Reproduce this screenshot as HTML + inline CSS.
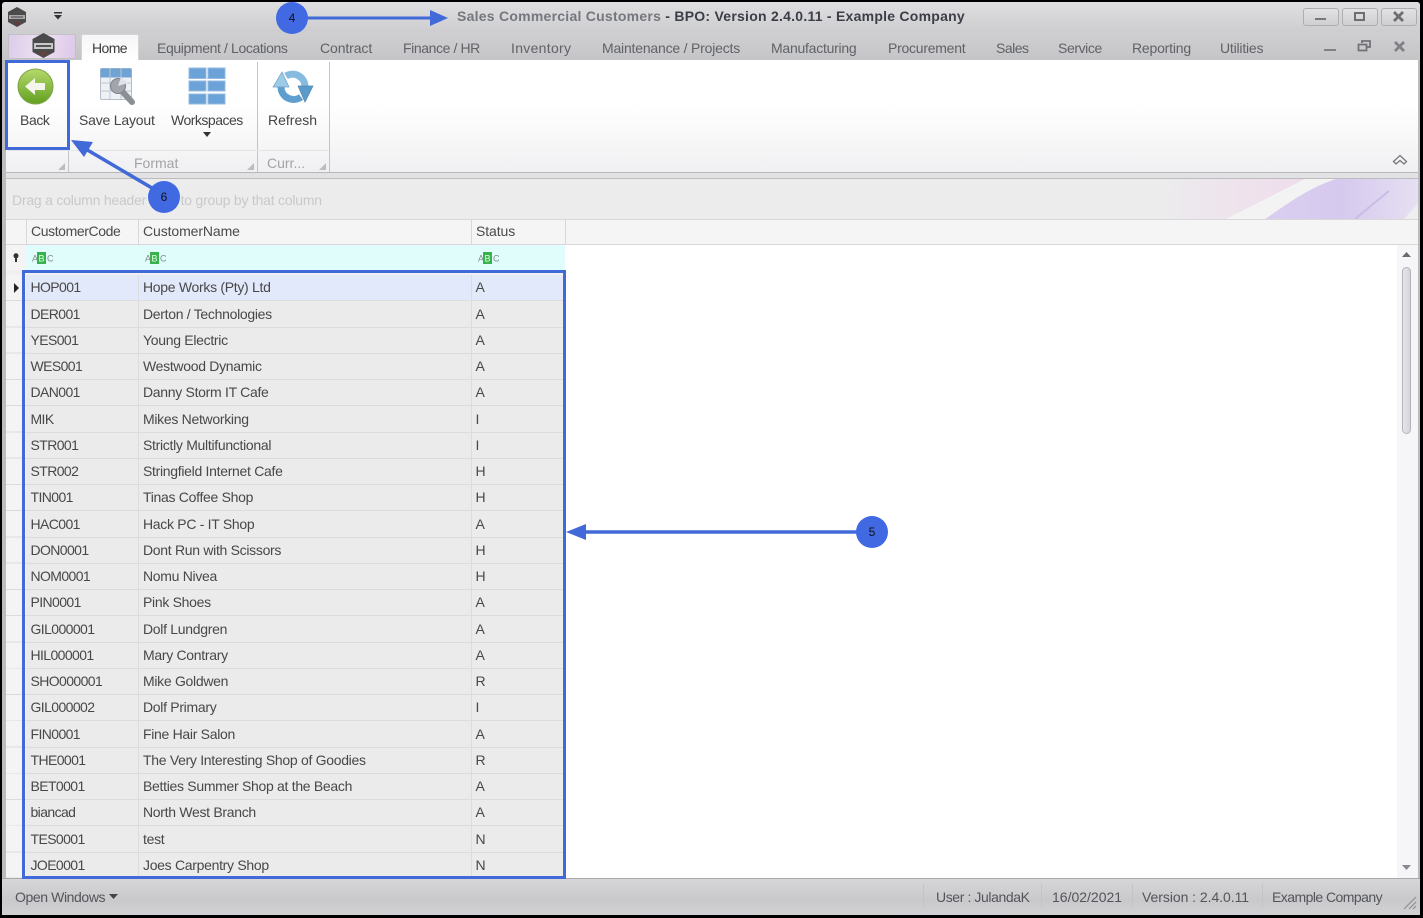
<!DOCTYPE html>
<html><head><meta charset="utf-8"><title>Sales Commercial Customers</title>
<style>
html,body{margin:0;padding:0;background:#000}
#p{position:relative;width:1423px;height:918px;overflow:hidden;background:#000;font-family:"Liberation Sans",sans-serif;font-size:14px;color:#4a4a4a}
#p div,#p span{position:absolute;white-space:nowrap}
.t{line-height:18px;height:18px;filter:blur(.3px)}
.tab{top:39px;color:#5f6268}
.r{left:7px;width:558px;height:26.25px;background:#ebebeb;border-bottom:1px solid #dcdcde;box-sizing:border-box}
.r span{top:3.3px;line-height:18px;color:#484848;filter:blur(.3px)}
.a{left:23.5px;letter-spacing:-.6px}.b{left:136px;letter-spacing:-.3px}.c{left:468.500px}
.sep{width:1px;background:#c4c4c6}
.num{width:32px;height:32px;border-radius:50%;background:#4169e1;color:#111;font-size:12px;line-height:32px;text-align:center}
</style></head><body><div id="p">
<!-- window frame -->
<div style="left:2px;top:2px;width:1418px;height:913px;background:#bcbcbf;border-radius:3px 3px 0 0"></div>
<div style="left:2px;top:2px;width:1418px;height:31px;background:linear-gradient(#dfdfe1,#cdcdcf);border-radius:3px 3px 0 0"></div>
<div style="left:2px;top:33px;width:1418px;height:27px;background:linear-gradient(#cfcfd1,#c5c5c7)"></div>

<!-- title bar -->
<svg style="position:absolute;left:6px;top:6px" width="22" height="22" viewBox="0 0 22 22"><path d="M11 1l9 5v10l-9 5-9-5V6z" fill="#4c4a4a"/><path d="M3 9h16v4H3z" fill="#a9a9a9"/><path d="M5 10.500h12v1H5z" fill="#444"/><path d="M8 16h6l-3 4z" fill="#6b3a36"/></svg>
<svg style="position:absolute;left:53px;top:11px" width="11" height="10" viewBox="0 0 11 10"><path d="M1 1h8v1.500H1zM1 4h8L5 8.500z" fill="#333"/></svg>
<div class="t" style="left:457px;top:7px;font-size:14px;font-weight:bold;color:#74777d;letter-spacing:.25px">Sales Commercial Customers <span style="position:static;color:#3b3e46">- BPO: Version 2.4.0.11 - Example Company</span></div>
<div style="left:1303px;top:8px;width:34px;height:16px;border:1px solid #aeaeb2;border-radius:3px;background:linear-gradient(#e2e2e4,#cfcfd2)"></div>
<div style="left:1342px;top:8px;width:34px;height:16px;border:1px solid #aeaeb2;border-radius:3px;background:linear-gradient(#e2e2e4,#cfcfd2)"></div>
<div style="left:1381px;top:8px;width:34px;height:16px;border:1px solid #aeaeb2;border-radius:3px;background:linear-gradient(#e2e2e4,#cfcfd2)"></div>
<div style="left:1315px;top:18px;width:11px;height:2px;background:#77787c"></div>
<div style="left:1354px;top:12px;width:7px;height:5px;border:2px solid #6d6e72"></div>
<svg style="position:absolute;left:1392px;top:11px" width="13" height="11" viewBox="0 0 13 11"><path d="M2 1l9 9M11 1l-9 9" stroke="#6d6e72" stroke-width="2.800"/></svg>

<!-- app button -->
<div style="left:8px;top:34px;width:68px;height:25px;background:linear-gradient(100deg,#d9cde8,#efe0f2 50%,#dcc8e8);border:1px solid #c2bfc6;box-sizing:border-box"></div>
<svg style="position:absolute;left:30px;top:32px" width="27" height="27" viewBox="0 0 27 27"><path d="M13.500 1l11 6v13l-11 6-11-6V7z" fill="#4b4a4a"/><path d="M4 11h19v6H4z" fill="#c8c8c8"/><path d="M6 13h15v2H6z" fill="#555"/><path d="M10 20h7l-3.500 5z" fill="#6d3f3a"/></svg>

<!-- tabs -->
<div style="left:81px;top:34px;width:58px;height:27px;background:linear-gradient(#f6f6f7,#fff);border:1px solid #d4d4d6;border-bottom:0;box-sizing:border-box;border-radius:2px 2px 0 0"></div>
<div class="t" style="left:92px;top:39px;color:#3c3c3c;letter-spacing:-.6px">Home</div>
<div class="t tab" style="left:157px;letter-spacing:-.38px">Equipment / Locations</div>
<div class="t tab" style="left:320px;letter-spacing:-.1px">Contract</div>
<div class="t tab" style="left:403px;letter-spacing:-.4px">Finance / HR</div>
<div class="t tab" style="left:511px;letter-spacing:.3px">Inventory</div>
<div class="t tab" style="left:602px;letter-spacing:-.2px">Maintenance / Projects</div>
<div class="t tab" style="left:771px;letter-spacing:-.25px">Manufacturing</div>
<div class="t tab" style="left:888px;letter-spacing:-.25px">Procurement</div>
<div class="t tab" style="left:996px;letter-spacing:-.5px">Sales</div>
<div class="t tab" style="left:1058px;letter-spacing:-.4px">Service</div>
<div class="t tab" style="left:1132px;letter-spacing:-.2px">Reporting</div>
<div class="t tab" style="left:1220px;letter-spacing:-.2px">Utilities</div>
<div style="left:1324px;top:49px;width:12px;height:2px;background:#808186"></div>
<svg style="position:absolute;left:1357px;top:40px" width="15" height="12" viewBox="0 0 15 12"><path d="M5 3V1h8v6h-3M1.500 4.500h8v6h-8z" fill="none" stroke="#717277" stroke-width="1.800"/></svg>
<svg style="position:absolute;left:1393px;top:41px" width="13" height="11" viewBox="0 0 13 11"><path d="M2 1l9 9M11 1l-9 9" stroke="#808186" stroke-width="2.800"/></svg>

<!-- ribbon -->
<div style="left:6px;top:60px;width:1412px;height:113px;background:linear-gradient(#fff 40%,#f0f0f2);border-bottom:1px solid #b8b8bb;box-sizing:border-box"></div>
<div class="sep" style="left:68px;top:62px;height:110px"></div>
<div class="sep" style="left:257px;top:62px;height:110px"></div>
<div class="sep" style="left:329px;top:62px;height:110px"></div>
<div style="left:8px;top:150px;width:320px;height:1px;background:#e6e6e8"></div>

<!-- back icon -->
<svg style="position:absolute;left:17px;top:68px" width="37" height="37" viewBox="0 0 37 37"><defs><linearGradient id="g" x1="0" y1="0" x2="0" y2="1"><stop offset="0" stop-color="#b5d96a"/><stop offset="1" stop-color="#62a020"/></linearGradient></defs><circle cx="18.500" cy="18.500" r="17.500" fill="url(#g)" stroke="#7fa34a"/><path d="M8 18.500l10-8.500v5h10v7H18v5z" fill="#f4f6ec"/></svg>
<div class="t" style="left:20px;top:111px;color:#444;letter-spacing:-.4px">Back</div>

<!-- save layout icon -->
<svg style="position:absolute;left:99px;top:67px" width="38" height="38" viewBox="0 0 38 38"><rect x="1.500" y="1.500" width="31" height="31" rx="1.500" fill="#eef1f4" stroke="#b5bec9"/><rect x="1.500" y="1.500" width="31" height="9" fill="#6fa3d4"/><path d="M11 1v31M22 1v31M1 16h31M1 24h31" stroke="#bcc6d2"/><path d="M20 21L33 35" stroke="#8b9097" stroke-width="6" stroke-linecap="round"/><circle cx="19" cy="19" r="7.500" fill="#a2a6ac" stroke="#7d8187"/><path d="M19 19l3-9 7 6z" fill="#dfe4ea"/></svg>
<div class="t" style="left:79px;top:111px;color:#444;letter-spacing:-.2px">Save Layout</div>

<!-- workspaces icon -->
<svg style="position:absolute;left:188px;top:67px" width="38" height="38" viewBox="0 0 38 38"><g fill="#6ba3d8" stroke="#94bbe0"><rect x="1" y="1" width="17" height="10.500"/><rect x="20" y="1" width="17" height="10.500"/><rect x="1" y="14" width="17" height="10"/><rect x="20" y="14" width="17" height="10"/><rect x="1" y="27" width="17" height="10"/><rect x="20" y="27" width="17" height="10"/></g></svg>
<div class="t" style="left:171px;top:111px;color:#444;letter-spacing:-.5px">Workspaces</div>
<svg style="position:absolute;left:202px;top:132px" width="10" height="6" viewBox="0 0 10 6"><path d="M1 0h8L5 5z" fill="#333"/></svg>

<!-- refresh icon -->
<svg style="position:absolute;left:272px;top:70px" width="42" height="34" viewBox="0 0 42 34"><path d="M9 17A12.500 12.500 0 0 0 29 27" fill="none" stroke="#5f9fd0" stroke-width="7"/><path d="M1 17h16L10 2z" fill="#9ccbe8" stroke="#6f9fc4" stroke-width=".7"/><path d="M33 16A12.500 12.500 0 0 0 14 6" fill="none" stroke="#86bbe0" stroke-width="7"/><path d="M26 16h15l-8 16z" fill="#5a9bcc" stroke="#4f86b0" stroke-width=".7"/></svg>
<div class="t" style="left:268px;top:111px;color:#444">Refresh</div>

<div class="t" style="left:134px;top:154px;color:#a3a3a6">Format</div>
<div class="t" style="left:267px;top:154px;color:#a3a3a6">Curr...</div>
<svg style="position:absolute;left:58px;top:163px" width="7" height="7"><path d="M7 0v7H0z" fill="#bcbcbe"/></svg>
<svg style="position:absolute;left:247px;top:163px" width="7" height="7"><path d="M7 0v7H0z" fill="#bcbcbe"/></svg>
<svg style="position:absolute;left:319px;top:163px" width="7" height="7"><path d="M7 0v7H0z" fill="#bcbcbe"/></svg>
<svg style="position:absolute;left:1392px;top:154px" width="16" height="13" viewBox="0 0 16 13"><path d="M1.500 7.500L8 1.500l6.500 6L12 10 8 6.500 4 10z" fill="none" stroke="#77787c" stroke-width="1.300"/></svg>

<!-- group panel -->
<div style="left:6px;top:173px;width:1412px;height:6px;background:#e2e2e4"></div>
<div style="left:6px;top:178px;width:1412px;height:42px;background:#ececed;border-top:1px solid #bcbcbf;border-bottom:1px solid #d8d8da;box-sizing:border-box;overflow:hidden">
<svg style="position:absolute;left:1150px;top:0" width="262" height="40" viewBox="0 0 262 40"><defs><linearGradient id="pk" x1="0" x2="1"><stop offset="0" stop-color="#ececed"/><stop offset="1" stop-color="#efdcec"/></linearGradient><linearGradient id="pu" x1="0" x2="1"><stop offset="0" stop-color="#d9cff0"/><stop offset=".5" stop-color="#d6c9ee"/><stop offset="1" stop-color="#e6e0f2"/></linearGradient></defs><path d="M20 0H149L70 40H0z" fill="url(#pk)"/><path d="M70 40L149 0h30L109 40z" fill="#f3f3f4"/><path d="M109 40C130 26 150 10 180 0H262V40z" fill="url(#pu)"/><path d="M199 40c12-10 24-20 34-28" stroke="#c9bce6" stroke-width="2" fill="none"/><path d="M248 40l14-16v16z" fill="#eeeef0"/></svg>
</div>
<div class="t" style="left:12px;top:191px;color:#c9c9cb;letter-spacing:-.22px">Drag a column header here to group by that column</div>

<!-- grid -->
<div style="left:6px;top:220px;width:1412px;height:658px;background:#fff"></div>
<div style="left:6px;top:220px;width:1412px;height:25px;background:#f5f5f6;border-bottom:1px solid #d8d8da;box-sizing:border-box"></div>
<div style="left:26px;top:220px;width:1px;height:25px;background:#d8d8da"></div>
<div style="left:138px;top:220px;width:1px;height:25px;background:#d8d8da"></div>
<div style="left:471px;top:220px;width:1px;height:25px;background:#d8d8da"></div>
<div style="left:565px;top:220px;width:1px;height:25px;background:#d8d8da"></div>
<div class="t" style="left:31px;top:222px;letter-spacing:-.4px">CustomerCode</div>
<div class="t" style="left:143px;top:222px;letter-spacing:-.1px">CustomerName</div>
<div class="t" style="left:476px;top:222px;letter-spacing:-.1px">Status</div>

<div style="left:26px;top:245px;width:539px;height:25px;background:#e1fdfb"></div>
<div style="left:6px;top:245px;width:20px;height:630px;background:#f4f4f5"></div>
<div style="left:6px;top:270px;width:560px;height:5px;background:#f0f0f1"></div>
<svg style="position:absolute;left:12px;top:253px" width="8" height="10" viewBox="0 0 8 10"><circle cx="4" cy="2.800" r="2.500" fill="#333"/><path d="M3 4h2v5H3z" fill="#333"/></svg>
<svg style="position:absolute;left:32px;top:251px" width="22" height="14" viewBox="0 0 22 14"><rect x="5" y="1" width="9" height="12" fill="#37b24d"/><text x="0" y="10.500" font-size="9" fill="#7f8c85" font-family="Liberation Sans">A</text><text x="6.500" y="10.500" font-size="9" fill="#e8ffe8" font-family="Liberation Sans">B</text><text x="15" y="10.500" font-size="9" fill="#7f8c85" font-family="Liberation Sans">C</text></svg>
<svg style="position:absolute;left:145px;top:251px" width="22" height="14" viewBox="0 0 22 14"><rect x="5" y="1" width="9" height="12" fill="#37b24d"/><text x="0" y="10.500" font-size="9" fill="#7f8c85" font-family="Liberation Sans">A</text><text x="6.500" y="10.500" font-size="9" fill="#e8ffe8" font-family="Liberation Sans">B</text><text x="15" y="10.500" font-size="9" fill="#7f8c85" font-family="Liberation Sans">C</text></svg>
<svg style="position:absolute;left:478px;top:251px" width="22" height="14" viewBox="0 0 22 14"><rect x="5" y="1" width="9" height="12" fill="#37b24d"/><text x="0" y="10.500" font-size="9" fill="#7f8c85" font-family="Liberation Sans">A</text><text x="6.500" y="10.500" font-size="9" fill="#e8ffe8" font-family="Liberation Sans">B</text><text x="15" y="10.500" font-size="9" fill="#7f8c85" font-family="Liberation Sans">C</text></svg>

<div class="r" style="top:275px;background:#e2e9fa"><span class="a">HOP001</span><span class="b">Hope Works (Pty) Ltd</span><span class="c">A</span></div>
<div class="r" style="top:301.250px"><span class="a">DER001</span><span class="b">Derton / Technologies</span><span class="c">A</span></div>
<div class="r" style="top:327.500px"><span class="a">YES001</span><span class="b">Young Electric</span><span class="c">A</span></div>
<div class="r" style="top:353.750px"><span class="a">WES001</span><span class="b">Westwood Dynamic</span><span class="c">A</span></div>
<div class="r" style="top:380px"><span class="a">DAN001</span><span class="b">Danny Storm IT Cafe</span><span class="c">A</span></div>
<div class="r" style="top:406.250px"><span class="a">MIK</span><span class="b">Mikes Networking</span><span class="c">I</span></div>
<div class="r" style="top:432.500px"><span class="a">STR001</span><span class="b">Strictly Multifunctional</span><span class="c">I</span></div>
<div class="r" style="top:458.750px"><span class="a">STR002</span><span class="b">Stringfield Internet Cafe</span><span class="c">H</span></div>
<div class="r" style="top:485px"><span class="a">TIN001</span><span class="b">Tinas Coffee Shop</span><span class="c">H</span></div>
<div class="r" style="top:511.250px"><span class="a">HAC001</span><span class="b">Hack PC - IT Shop</span><span class="c">A</span></div>
<div class="r" style="top:537.500px"><span class="a">DON0001</span><span class="b">Dont Run with Scissors</span><span class="c">H</span></div>
<div class="r" style="top:563.750px"><span class="a">NOM0001</span><span class="b">Nomu Nivea</span><span class="c">H</span></div>
<div class="r" style="top:590px"><span class="a">PIN0001</span><span class="b">Pink Shoes</span><span class="c">A</span></div>
<div class="r" style="top:616.250px"><span class="a">GIL000001</span><span class="b">Dolf Lundgren</span><span class="c">A</span></div>
<div class="r" style="top:642.500px"><span class="a">HIL000001</span><span class="b">Mary Contrary</span><span class="c">A</span></div>
<div class="r" style="top:668.750px"><span class="a">SHO000001</span><span class="b">Mike Goldwen</span><span class="c">R</span></div>
<div class="r" style="top:695px"><span class="a">GIL000002</span><span class="b">Dolf Primary</span><span class="c">I</span></div>
<div class="r" style="top:721.250px"><span class="a">FIN0001</span><span class="b">Fine Hair Salon</span><span class="c">A</span></div>
<div class="r" style="top:747.500px"><span class="a">THE0001</span><span class="b">The Very Interesting Shop of Goodies</span><span class="c">R</span></div>
<div class="r" style="top:773.750px"><span class="a">BET0001</span><span class="b">Betties Summer Shop at the Beach</span><span class="c">A</span></div>
<div class="r" style="top:800px"><span class="a">biancad</span><span class="b">North West Branch</span><span class="c">A</span></div>
<div class="r" style="top:826.250px"><span class="a">TES0001</span><span class="b">test</span><span class="c">N</span></div>
<div class="r" style="top:852.500px;height:25.500px"><span class="a">JOE0001</span><span class="b">Joes Carpentry Shop</span><span class="c">N</span></div>
<div style="left:6px;top:275px;width:20px;height:603px;background:repeating-linear-gradient(#f4f4f5 0,#f4f4f5 25.250px,#dcdcde 25.250px,#dcdcde 26.250px)"></div>
<div style="left:138px;top:275px;width:1px;height:603px;background:#dcdcde"></div>
<div style="left:471px;top:275px;width:1px;height:603px;background:#dcdcde"></div>
<svg style="position:absolute;left:13px;top:283px" width="6" height="10" viewBox="0 0 6 10"><path d="M1 0l5 5-5 5z" fill="#222"/></svg>

<!-- scrollbar -->
<div style="left:1397px;top:245px;width:21px;height:633px;background:#f6f6f8"></div>
<svg style="position:absolute;left:1402px;top:252px" width="9" height="6"><path d="M4.500 0L9 5H0z" fill="#6a6a6e"/></svg>
<svg style="position:absolute;left:1402px;top:865px" width="9" height="6"><path d="M0 0h9L4.500 5z" fill="#8a8a8e"/></svg>
<div style="left:1402px;top:267px;width:7px;height:165px;background:linear-gradient(90deg,#e6e6ea,#d5d5da);border:1px solid #b4b4b8;border-radius:5px"></div>

<!-- status bar -->
<div style="left:2px;top:878px;width:1418px;height:37px;background:linear-gradient(#d6d6d8,#c9c9cc 60%,#d2d2d5);border-top:1px solid #a9a9ac;box-sizing:border-box"></div>
<div class="t" style="left:15px;top:888px;color:#53555a;letter-spacing:-.4px">Open Windows</div>
<svg style="position:absolute;left:109px;top:894px" width="9" height="6"><path d="M0 0h9L4.500 5z" fill="#444"/></svg>
<div class="sep" style="left:923px;top:884px;height:24px"></div>
<div class="sep" style="left:1041px;top:884px;height:24px"></div>
<div class="sep" style="left:1132px;top:884px;height:24px"></div>
<div class="sep" style="left:1262px;top:884px;height:24px"></div>
<div class="t" style="left:936px;top:888px;color:#53555a;letter-spacing:-.4px">User : JulandaK</div>
<div class="t" style="left:1052px;top:888px;color:#53555a">16/02/2021</div>
<div class="t" style="left:1142px;top:888px;color:#53555a;letter-spacing:-.05px">Version : 2.4.0.11</div>
<div class="t" style="left:1272px;top:888px;color:#53555a;letter-spacing:-.55px">Example Company</div>
<svg style="position:absolute;left:1402px;top:895px" width="15" height="15" viewBox="0 0 15 15"><path d="M2 14L14 2M7 14l7-7M11 14l3-3" stroke="#8f8f93" stroke-width="1.200"/></svg>

<!-- annotations -->
<div style="left:22px;top:270px;width:544px;height:609px;border:3px solid #4169d8;box-sizing:border-box"></div>
<div style="left:5px;top:60px;width:65px;height:90px;border:3px solid #4169d8;box-sizing:border-box"></div>
<svg style="position:absolute;left:0;top:0" width="1423" height="918" viewBox="0 0 1423 918">
<path d="M300 18H432" stroke="#4169d8" stroke-width="3"/><path d="M448 18l-18-8v16z" fill="#4169d8"/>
<path d="M860 532H584" stroke="#4169d8" stroke-width="3.500"/><path d="M566 532l20-8v16z" fill="#4169d8"/>
<path d="M152 188L84 148" stroke="#4169d8" stroke-width="3.500"/><path d="M71 140l22 2-9 15z" fill="#4169d8"/>
</svg>
<div class="num" style="left:276px;top:2px;line-height:32px">4</div>
<div class="num" style="left:856px;top:516px">5</div>
<div class="num" style="left:148px;top:181px">6</div>
</div></body></html>
